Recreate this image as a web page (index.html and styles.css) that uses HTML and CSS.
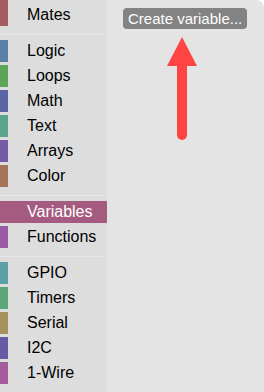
FILE: index.html
```html
<!DOCTYPE html>
<html lang="en">
<head>
    <meta charset="UTF-8">
    <title>Toolbox</title>
    <link rel="stylesheet" href="styles.css">
</head>
<body>
    <div class="editor">
        <div class="toolbox">
            <div class="row first" style="border-left-color: #a55b5f;">Mates</div>
            <div class="sep"></div>
            <div class="row" style="border-left-color: #5b80a5;">Logic</div>
            <div class="row" style="border-left-color: #5ba55b;">Loops</div>
            <div class="row" style="border-left-color: #5b67a5;">Math</div>
            <div class="row" style="border-left-color: #5ba58c;">Text</div>
            <div class="row" style="border-left-color: #745ba5;">Arrays</div>
            <div class="row" style="border-left-color: #a5745b;">Color</div>
            <div class="sep"></div>
            <div class="row selected" style="border-left-color: #a55b80;">Variables</div>
            <div class="row" style="border-left-color: #995ba5;">Functions</div>
            <div class="sep"></div>
            <div class="row" style="border-left-color: #5ba0a5;">GPIO</div>
            <div class="row" style="border-left-color: #5ba578;">Timers</div>
            <div class="row" style="border-left-color: #a5915b;">Serial</div>
            <div class="row" style="border-left-color: #655ba5;">I2C</div>
            <div class="row" style="border-left-color: #a55b9c;">1-Wire</div>
        </div>
        <div class="flyout">
            <div class="flyout-button">Create variable...</div>
            <!-- annotation arrow pointing at the button -->
            <svg class="arrow" width="40" height="110" viewBox="0 0 40 110">
                <polygon points="15,0 30,29 0,29" fill="#ff4444"/>
                <line x1="15" y1="26" x2="15" y2="98" stroke="#ff4444" stroke-width="10" stroke-linecap="round"/>
            </svg>
        </div>
    </div>
</body>
</html>
```

FILE: styles.css
```css
body {
    margin: 0;
    padding: 0;
    background-color: #ffffff;
    font-family: "Liberation Sans", Arial, sans-serif;
}
.editor {
    display: flex;
    height: 392px;
}
.toolbox {
    width: 107px;
    background-color: #dddddd;
    display: flex;
    flex-direction: column;
}
.row {
    height: 22px;
    line-height: 22px;
    margin-bottom: 3px;
    padding-left: 19px;
    border-left: 8px solid #888;
    font-size: 16px;
    color: #000;
    white-space: nowrap;
}
.row.first {
    height: 26px;
    line-height: 30px;
}
.row.selected {
    background-color: #a55b80;
    color: #fff;
}
.sep {
    height: 0;
    border-bottom: 1px solid #e6e6e6;
    margin: 5px 0;
}
.flyout {
    flex: 1;
    position: relative;
    background-color: #e4e4e4;
    border-top-right-radius: 8px;
    padding: 8px 0 0 16px;
}
.flyout-button {
    display: inline-block;
    height: 21px;
    line-height: 21px;
    padding: 0 5px;
    background-color: #838383;
    color: #fff;
    font-size: 15px;
    border-radius: 4px;
}
.arrow {
    position: absolute;
    left: 60px;
    top: 37px;
}
```
